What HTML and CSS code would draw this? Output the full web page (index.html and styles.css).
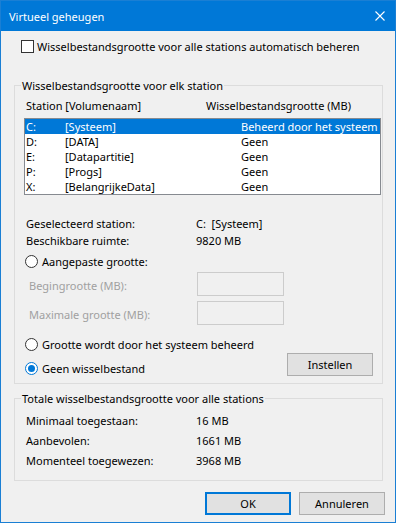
FILE: index.html
```html
<!DOCTYPE html>
<html lang="nl">
  <head>
    <meta charset="UTF-8" />
    <meta name="viewport" content="width=device-width, initial-scale=1.0" />
    <title>Virtueel geheugen</title>
    <link rel="stylesheet" href="styles.css">
  </head>
  <body>
    <div class="window">
      <div class="titlebar">
        <span class="title">Virtueel geheugen</span>
        <svg class="close" width="10" height="10" viewBox="0 0 10 10">
          <path d="M0.5 0.5 L9.5 9.5 M9.5 0.5 L0.5 9.5" stroke="#fff" stroke-width="1.1" fill="none" />
        </svg>
      </div>

      <div class="content">
        <div class="check"><span class="box"></span>Wisselbestandsgrootte voor alle stations automatisch beheren</div>

        <fieldset class="group group-drive">
          <legend>Wisselbestandsgrootte voor elk station</legend>
          <div class="list-head">
            <span class="col-drive">Station [Volumenaam]</span>
            <span>Wisselbestandsgrootte (MB)</span>
          </div>
          <ul class="list">
            <li class="selected"><span class="c1">C:</span><span class="c2">[Systeem]</span><span>Beheerd door het systeem</span></li>
            <li><span class="c1">D:</span><span class="c2">[DATA]</span><span>Geen</span></li>
            <li><span class="c1">E:</span><span class="c2">[Datapartitie]</span><span>Geen</span></li>
            <li><span class="c1">P:</span><span class="c2">[Progs]</span><span>Geen</span></li>
            <li><span class="c1">X:</span><span class="c2">[BelangrijkeData]</span><span>Geen</span></li>
          </ul>

          <div class="info">
            <span>Geselecteerd station:</span><span>C:&nbsp; [Systeem]</span>
            <span>Beschikbare ruimte:</span><span>9820 MB</span>
          </div>

          <div class="radio radio-custom"><span class="mark"></span>Aangepaste grootte:</div>
          <div class="field"><span class="label">Begingrootte (MB):</span><span class="input"></span></div>
          <div class="field"><span class="label">Maximale grootte (MB):</span><span class="input"></span></div>

          <div class="bottom-row">
            <div class="radios">
              <div class="radio"><span class="mark"></span>Grootte wordt door het systeem beheerd</div>
              <div class="radio checked"><span class="mark"></span>Geen wisselbestand</div>
            </div>
            <button class="btn">Instellen</button>
          </div>
        </fieldset>

        <fieldset class="group group-total">
          <legend>Totale wisselbestandsgrootte voor alle stations</legend>
          <div class="totals">
            <span>Minimaal toegestaan:</span><span>16 MB</span>
            <span>Aanbevolen:</span><span>1661 MB</span>
            <span>Momenteel toegewezen:</span><span>3968 MB</span>
          </div>
        </fieldset>

        <div class="actions">
          <button class="btn btn-default">OK</button>
          <button class="btn">Annuleren</button>
        </div>
      </div>
    </div>
  </body>
</html>
```

FILE: styles.css
```css
* {
  margin: 0;
  padding: 0;
  box-sizing: border-box;
}
body {
  font-family: "Noto Sans", "Liberation Sans", sans-serif;
  font-size: 11px;
  color: #000;
  background: #fff;
}
.window {
  width: 396px;
  height: 523px;
  border: 1px solid #1a7fd4;
  background: #f0f0f0;
}
.titlebar {
  height: 30px;
  background: #0078d7;
  color: #fff;
  display: flex;
  align-items: center;
  justify-content: space-between;
  padding: 0 10px 0 8px;
}
.content {
  padding: 8px 12px 0 13px;
}
.check {
  display: flex;
  align-items: center;
  gap: 3px;
  height: 15px;
  padding-left: 7px;
}
.check .box {
  width: 13px;
  height: 13px;
  border: 1px solid #333;
  background: #fff;
}
.group {
  border: 1px solid #dcdcdc;
}
.group legend {
  margin-left: -3px;
  padding: 0 1px;
  line-height: 15px;
}
.group-drive {
  margin-top: 24px;
  padding: 5px 1px 7px 9px;
}
.list-head {
  display: flex;
  height: 15px;
  line-height: 15px;
  padding-left: 2px;
}
.list-head .col-drive {
  width: 180px;
}
.list {
  list-style: none;
  margin-top: 5px;
  border: 1px solid #868a90;
  background: #fff;
}
.list li {
  display: flex;
  height: 15px;
  line-height: 15px;
  padding-left: 1px;
}
.list li.selected {
  background: #0078d7;
  color: #fff;
}
.list .c1 {
  width: 39px;
}
.list .c2 {
  width: 176px;
}
.info {
  display: grid;
  grid-template-columns: 170px auto;
  margin-top: 20px;
  padding-left: 2px;
  line-height: 17px;
}
.radio {
  display: flex;
  align-items: center;
  gap: 4px;
  height: 15px;
  padding-left: 1px;
}
.radio .mark {
  width: 13px;
  height: 13px;
  border: 1px solid #333;
  border-radius: 50%;
  background: #fff;
  position: relative;
}
.radio.checked .mark {
  border-color: #0078d7;
}
.radio.checked .mark::after {
  content: "";
  position: absolute;
  left: 2px;
  top: 2px;
  width: 7px;
  height: 7px;
  border-radius: 50%;
  background: #0078d7;
}
.radio-custom {
  margin-top: 5px;
}
.field {
  display: flex;
  align-items: center;
  height: 24px;
  margin-top: 3px;
  padding-left: 5px;
  color: #a0a0a0;
}
.field + .field {
  margin-top: 5px;
}
.field .label {
  width: 168px;
  padding-top: 3px;
}
.field .input {
  width: 87px;
  height: 24px;
  border: 1px solid #cccccc;
}
.bottom-row {
  display: flex;
  justify-content: space-between;
  align-items: flex-end;
  margin-top: 12px;
  padding-right: 8px;
}
.radios {
  display: flex;
  flex-direction: column;
  gap: 9px;
}
.btn {
  width: 86px;
  height: 23px;
  background: #e1e1e1;
  border: 1px solid #adadad;
  font: inherit;
  color: #000;
}
.btn-default {
  border: 2px solid #0078d7;
}
.group-total {
  margin-top: 7px;
  padding: 5px 1px 9px 9px;
}
.totals {
  display: grid;
  grid-template-columns: 170px auto;
  padding-left: 2px;
  line-height: 20px;
}
.actions {
  display: flex;
  justify-content: flex-end;
  gap: 8px;
  margin-top: 11px;
  margin-right: -2px;
}
```
